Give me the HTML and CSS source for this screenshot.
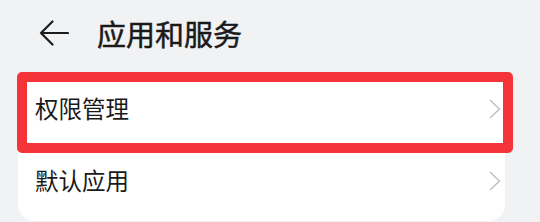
FILE: index.html
```html
<!DOCTYPE html>
<html lang="zh-CN">
<head>
  <meta charset="UTF-8" />
  <title>应用和服务</title>
  <link rel="stylesheet" href="styles.css">
</head>
<body>
  <header class="top-bar">
    <svg class="back" width="30" height="26" viewBox="0 0 30 26">
      <path d="M29 13 H2 M13.5 1.5 L2 13 L13.5 24.5" fill="none" stroke="#1c1c1c" stroke-width="2.2" stroke-linecap="round" stroke-linejoin="round"/>
    </svg>
    <h1 class="title">应用和服务</h1>
  </header>

  <div class="card">
    <div class="row">
      <span class="label">权限管理</span>
      <svg class="chevron" width="12" height="20" viewBox="0 0 12 20">
        <path d="M1.5 1.5 L10.5 10 L1.5 18.5" fill="none" stroke="#c2c2c2" stroke-width="1.6" stroke-linecap="round" stroke-linejoin="round"/>
      </svg>
    </div>
    <div class="row">
      <span class="label">默认应用</span>
      <svg class="chevron" width="12" height="20" viewBox="0 0 12 20">
        <path d="M1.5 1.5 L10.5 10 L1.5 18.5" fill="none" stroke="#c2c2c2" stroke-width="1.6" stroke-linecap="round" stroke-linejoin="round"/>
      </svg>
    </div>
  </div>

  <div class="highlight"></div>
</body>
</html>
```

FILE: styles.css
```css
body {
  margin: 0;
  background: #f1f2f4;
  font-family: "Noto Sans CJK SC", "Noto Sans", sans-serif;
  color: #1a1a1a;
  overflow: hidden;
}

.top-bar {
  display: flex;
  align-items: center;
  gap: 28px;
  height: 66px;
  padding-left: 39px;
}

.back {
  display: block;
  flex-shrink: 0;
}

.title {
  margin: 0;
  font-size: 29px;
  font-weight: 400;
  -webkit-text-stroke: 0.5px #1a1a1a;
  line-height: 1;
}

.card {
  margin: 7px 35px 0 18px;
  padding-bottom: 4px;
  background: #fff;
  border-radius: 16px;
}

.row {
  display: flex;
  align-items: center;
  justify-content: space-between;
  height: 72px;
  padding: 0 4px 0 17px;
}

.label {
  font-size: 23.5px;
  line-height: 1;
}

.chevron {
  display: block;
}

.highlight {
  position: absolute;
  left: 17px;
  top: 72px;
  width: 496px;
  height: 81px;
  box-sizing: border-box;
  border: 10px solid #f43438;
  border-radius: 5px;
}
```
